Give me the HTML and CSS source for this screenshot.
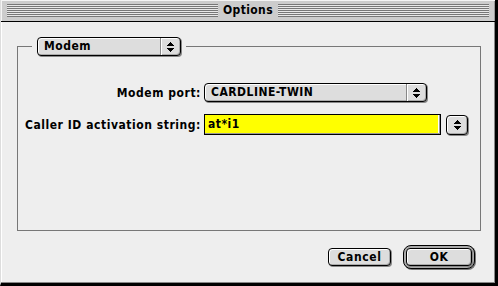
FILE: index.html
```html
<!DOCTYPE html>
<html lang="en">
<head>
    <meta charset="UTF-8">
    <title>Options</title>
    <link rel="stylesheet" href="styles.css">
</head>
<body>
    <div class="window">
        <div class="titlebar">
            <div class="stripes"><span class="title">Options</span></div>
        </div>

        <div class="content">
            <fieldset class="group">
                <legend class="group-title">
                    <div class="popup popup-small">
                        <span class="popup-label">Modem</span>
                        <span class="popup-arrows">
                            <svg width="7" height="10" viewBox="0 0 7 10" shape-rendering="crispEdges"><path d="M3 0h1v1h1v1h1v1h1v1H0V3h1V2h1V1h1z M0 6h7v1H6v1H5v1H4v1H3V9H2V8H1V7H0z" fill="#000"/></svg>
                        </span>
                    </div>
                </legend>

                <div class="form">
                    <label class="form-label">Modem port:</label>
                    <div class="popup popup-wide">
                        <span class="popup-label">CARDLINE-TWIN</span>
                        <span class="popup-arrows">
                            <svg width="7" height="10" viewBox="0 0 7 10" shape-rendering="crispEdges"><path d="M3 0h1v1h1v1h1v1h1v1H0V3h1V2h1V1h1z M0 6h7v1H6v1H5v1H4v1H3V9H2V8H1V7H0z" fill="#000"/></svg>
                        </span>
                    </div>

                    <label class="form-label">Caller ID activation string:</label>
                    <div class="field-row">
                        <div class="textfield"><span class="selection">at*i1</span></div>
                        <div class="stepper">
                            <svg width="7" height="10" viewBox="0 0 7 10" shape-rendering="crispEdges"><path d="M3 0h1v1h1v1h1v1h1v1H0V3h1V2h1V1h1z M0 6h7v1H6v1H5v1H4v1H3V9H2V8H1V7H0z" fill="#000"/></svg>
                        </div>
                    </div>
                </div>
            </fieldset>

            <div class="buttons">
                <button class="btn btn-cancel">Cancel</button>
                <div class="default-ring"><button class="btn btn-ok">OK</button></div>
            </div>
        </div>
    </div>
</body>
</html>
```

FILE: styles.css
```css
/* Window frame */
body {
    margin: 0;
    background: #eeeeee;
    font-family: 'DejaVu Sans Condensed', 'DejaVu Sans', sans-serif;
    font-weight: bold;
    font-size: 12px;
    color: #000;
}

.window {
    width: 498px;
    height: 286px;
    box-sizing: border-box;
    display: flex;
    flex-direction: column;
    background: #cccccc;
    border-left: 1px solid #dddddd;
    border-right: 3px solid #000;
    border-bottom: 3px solid #000;
}

/* Title bar */
.titlebar {
    height: 22px;
    box-sizing: border-box;
    padding: 4px 6px 0 6px;
    border-bottom: 1px solid #000;
    box-shadow: inset 1px 1px 0 #f4f4f4, inset -1px 0 0 #999;
}

.stripes {
    height: 13px;
    display: flex;
    justify-content: center;
    align-items: center;
    background: repeating-linear-gradient(to bottom, #777 0 1px, #e8e8e8 1px 2px);
}

.title {
    background: #cccccc;
    padding: 0 5px;
    height: 15px;
    line-height: 15px;
    letter-spacing: 0.4px;
}

/* Content area */
.content {
    flex: 1;
    display: flex;
    flex-direction: column;
    gap: 13px;
    padding: 15px 13px 12px 16px;
    background: #eeeeee;
    border-right: 1px solid #888;
    border-bottom: 1px solid #888;
    box-shadow: inset 1px 0 0 #fff;
}

.group {
    flex: 1;
    margin: 0;
    padding: 0;
    border: 1px solid #777;
    min-width: 0;
}

.group-title {
    margin-left: 14px;
    padding: 0 5px;
}

/* Popup menus */
.popup {
    height: 19px;
    box-sizing: border-box;
    display: flex;
    align-items: stretch;
    background: #dddddd;
    border: 1px solid #000;
    border-radius: 4px;
    box-shadow: 1px 1px 0 #888, inset 1px 1px 0 #fff, inset -1px -1px 0 #aaa;
}

.popup-small {
    width: 144px;
}

.popup-wide {
    width: 223px;
}

.popup-label {
    flex: 1;
    padding-left: 6px;
    line-height: 17px;
    letter-spacing: 0.5px;
}

.popup-arrows {
    width: 19px;
    display: flex;
    justify-content: center;
    align-items: center;
    border-left: 1px solid #888;
    box-shadow: inset 1px 0 0 #fff;
}

/* Form rows */
.form {
    margin-top: 27px;
    display: grid;
    grid-template-columns: 183px auto;
    column-gap: 3px;
    row-gap: 12px;
    align-items: center;
    justify-items: start;
}

.form-label {
    justify-self: end;
    letter-spacing: 0.55px;
}

.field-row {
    display: flex;
    align-items: center;
    gap: 5px;
}

.textfield {
    width: 237px;
    height: 21px;
    box-sizing: border-box;
    padding: 0 2px 1px 0;
    background: #fff;
    border: 1px solid #000;
    box-shadow: -1px -1px 0 #999 inset;
    display: flex;
}

.selection {
    flex: 1;
    background: #ffff00;
    padding-left: 3px;
    line-height: 18px;
    letter-spacing: 0.5px;
}

.stepper {
    width: 22px;
    height: 20px;
    box-sizing: border-box;
    display: flex;
    justify-content: center;
    align-items: center;
    background: #dddddd;
    border: 1px solid #000;
    border-radius: 4px;
    box-shadow: 1px 1px 0 #888, inset 1px 1px 0 #fff, inset -1px -1px 0 #aaa;
}

/* Buttons */
.buttons {
    height: 26px;
    display: flex;
    justify-content: flex-end;
    align-items: center;
    gap: 12px;
    padding-right: 6px;
}

.btn {
    height: 18px;
    box-sizing: border-box;
    padding: 0;
    font: inherit;
    letter-spacing: 0.6px;
    color: #000;
    background: #dddddd;
    border: 1px solid #000;
    border-radius: 4px;
    box-shadow: 1px 1px 0 #888, inset 1px 1px 0 #fff, inset -1px -1px 0 #aaa;
}

.btn-cancel {
    width: 63px;
}

.btn-ok {
    width: 66px;
}

.default-ring {
    display: flex;
    padding: 2px;
    background: #aaaaaa;
    border: 1px solid #000;
    border-radius: 8px;
    box-shadow: 1px 1px 0 #777;
}
```
